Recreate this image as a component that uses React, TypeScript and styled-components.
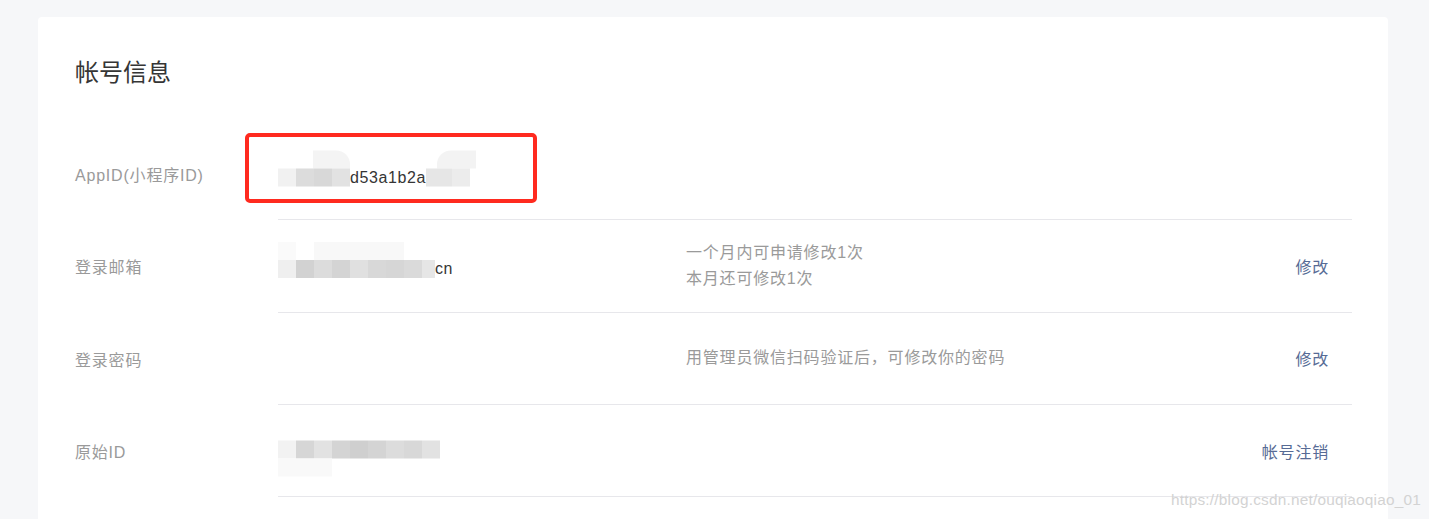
import { createGlobalStyle, styled } from 'styled-components';

const GlobalStyle = createGlobalStyle`
  html, body {
    margin: 0;
    padding: 0;
    background: #f6f7f9;
    overflow: hidden;
  }
  body {
    font-family: "Liberation Sans", "Noto Sans CJK SC", sans-serif;
  }
`;

const Page = styled.div`
  position: relative;
  height: 519px;
  padding: 17px 41px 0 38px;
  box-sizing: border-box;
`;

const Card = styled.section`
  background: #fff;
  border-radius: 4px;
  padding: 40px 36px 40px 37px;
  min-height: 600px;
  box-sizing: border-box;
`;

const Title = styled.h2`
  margin: 0 0 39px;
  font-size: 24px;
  line-height: 32px;
  font-weight: 400;
  color: #353535;
`;

const Row = styled.div`
  position: relative;
  display: flex;
  align-items: stretch;
`;

const Label = styled.div`
  width: 203px;
  flex-shrink: 0;
  display: flex;
  align-items: center;
  font-size: 16px;
  letter-spacing: 0.8px;
  color: #9a9a9a;
`;

const Body = styled.div`
  flex: 1;
  display: flex;
  align-items: center;
  min-height: 91.3px;
  border-bottom: 1px solid #e7e7eb;
`;

const Value = styled.div`
  width: 408px;
  flex-shrink: 0;
  font-size: 16px;
  color: #353535;
`;

const Desc = styled.div`
  flex: 1;
  font-size: 16px;
  line-height: 26px;
  letter-spacing: 0.8px;
  color: #9a9a9a;
`;

const Action = styled.a`
  padding-right: 23px;
  font-size: 16px;
  letter-spacing: 0.8px;
  color: #576b95;
  text-decoration: none;
  cursor: pointer;
`;

const Mosaic = styled.div<{ $dy: number }>`
  display: flex;
  flex-direction: column;
  transform: translateY(${(p) => p.$dy}px);
`;

const MosaicLine = styled.div`
  display: flex;
  align-items: center;
  height: 18px;
`;

const Cell = styled.span<{ $c: string; $w?: number; $r?: string }>`
  display: block;
  width: ${(p) => p.$w ?? 18}px;
  height: 18px;
  background: ${(p) => p.$c};
  border-radius: ${(p) => p.$r ?? '0'};
`;

const PlainText = styled.span`
  font-size: 16px;
  line-height: 18px;
  letter-spacing: 0.6px;
  color: #353535;
`;

const Highlight = styled.div`
  position: absolute;
  left: 170px;
  top: 5px;
  width: 292px;
  height: 70px;
  border: 4px solid #ff2a1f;
  border-radius: 5px;
  box-sizing: border-box;
  pointer-events: none;
`;

const Watermark = styled.div`
  position: absolute;
  right: 8px;
  bottom: 10px;
  font-family: "Liberation Sans", Arial, sans-serif;
  font-size: 15.4px;
  color: #d3d3d3;
  letter-spacing: 0.2px;
`;

type Px = { c: string; w?: number; r?: string };

function Pixels({ cells }: { cells: Px[] }) {
  return (
    <>
      {cells.map((p, i) => (
        <Cell key={i} $c={p.c} $w={p.w} $r={p.r} />
      ))}
    </>
  );
}

const blank = (w: number): Px => ({ c: 'transparent', w });

function App() {
  return (
    <>
      <GlobalStyle />
      <Page>
        <Card>
          <Title>帐号信息</Title>

          <Row>
            <Label>AppID(小程序ID)</Label>
            <Body>
              <Value>
                <Mosaic $dy={-5.5}>
                  <MosaicLine>
                    <Pixels
                      cells={[
                        blank(35),
                        { c: '#f4f4f4', w: 37, r: '0 14px 0 0' },
                        blank(87),
                        { c: '#f3f3f3', w: 39, r: '14px 0 0 0' },
                      ]}
                    />
                  </MosaicLine>
                  <MosaicLine>
                    <Pixels
                      cells={[
                        { c: '#f1f1f1' },
                        { c: '#dcdcdc' },
                        { c: '#d8d8d8' },
                        { c: '#e2e2e2' },
                      ]}
                    />
                    <PlainText>d53a1b2a</PlainText>
                    <Pixels cells={[{ c: '#e6e6e6', w: 26 }, { c: '#ececec' }]} />
                  </MosaicLine>
                </Mosaic>
              </Value>
            </Body>
            <Highlight />
          </Row>

          <Row>
            <Label>登录邮箱</Label>
            <Body>
              <Value>
                <Mosaic $dy={-6}>
                  <MosaicLine>
                    <Pixels
                      cells={[
                        { c: '#fafafa' },
                        blank(18),
                        { c: '#f8f8f8', w: 90 },
                      ]}
                    />
                  </MosaicLine>
                  <MosaicLine>
                    <Pixels
                      cells={[
                        { c: '#efefef' },
                        { c: '#d2d2d2' },
                        { c: '#dcdcdc' },
                        { c: '#d4d4d4' },
                        { c: '#e0e0e0' },
                        { c: '#d8d8d8' },
                        { c: '#d6d6d6' },
                        { c: '#dadada' },
                        { c: '#e6e6e6', w: 13 },
                      ]}
                    />
                    <PlainText>cn</PlainText>
                  </MosaicLine>
                </Mosaic>
              </Value>
              <Desc>
                一个月内可申请修改1次
                <br />
                本月还可修改1次
              </Desc>
              <Action>修改</Action>
            </Body>
          </Row>

          <Row>
            <Label>登录密码</Label>
            <Body>
              <Value />
              <Desc>用管理员微信扫码验证后，可修改你的密码</Desc>
              <Action>修改</Action>
            </Body>
          </Row>

          <Row>
            <Label>原始ID</Label>
            <Body>
              <Value>
                <Mosaic $dy={7.5}>
                  <MosaicLine>
                    <Pixels
                      cells={[
                        { c: '#f2f2f2' },
                        { c: '#d6d6d6' },
                        { c: '#e2e2e2' },
                        { c: '#d4d4d4' },
                        { c: '#cfcfcf' },
                        { c: '#d4d4d4' },
                        { c: '#dcdcdc' },
                        { c: '#d8d8d8' },
                        { c: '#e2e2e2' },
                      ]}
                    />
                  </MosaicLine>
                  <MosaicLine>
                    <Pixels cells={[{ c: '#f9f9f9', w: 54 }]} />
                  </MosaicLine>
                </Mosaic>
              </Value>
              <Desc />
              <Action>帐号注销</Action>
            </Body>
          </Row>
        </Card>
        <Watermark>https://blog.csdn.net/ouqiaoqiao_01</Watermark>
      </Page>
    </>
  );
}

export default App;
